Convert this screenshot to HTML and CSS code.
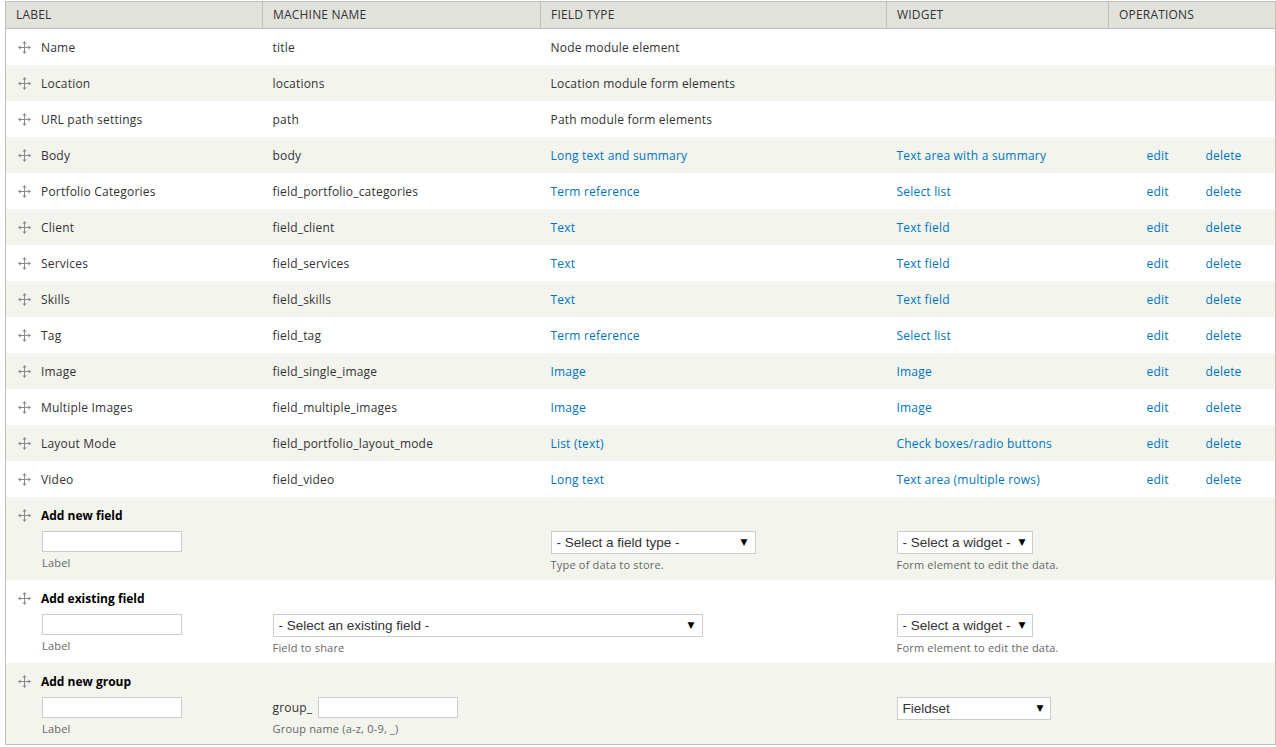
FILE: index.html
```html
<!DOCTYPE html>
<html>
<head>
<meta charset="utf-8">
<title>Manage fields</title>
<link rel="stylesheet" href="styles.css">
</head>
<body>
<table class="fields">
  <colgroup>
    <col class="c-label"><col class="c-machine"><col class="c-type"><col class="c-widget"><col class="c-edit"><col class="c-delete">
  </colgroup>
  <thead>
    <tr><th>Label</th><th>Machine name</th><th>Field type</th><th>Widget</th><th colspan="2">Operations</th></tr>
  </thead>
  <tbody>
    <tr class="odd"><td><span class="handle"><svg viewBox="0 0 13 13" width="13" height="13"><path d="M6.5 1.5v10M1.5 6.5h10" stroke="#8a8a8a" stroke-width="1"/><path d="M6.5 0l2 2.5h-4zM6.5 13l2-2.5h-4zM0 6.5l2.5-2v4zM13 6.5l-2.5-2v4z" fill="#8a8a8a"/></svg></span>Name</td><td>title</td><td>Node module element</td><td></td><td></td><td></td></tr>
    <tr class="even"><td><span class="handle"><svg viewBox="0 0 13 13" width="13" height="13"><path d="M6.5 1.5v10M1.5 6.5h10" stroke="#8a8a8a" stroke-width="1"/><path d="M6.5 0l2 2.5h-4zM6.5 13l2-2.5h-4zM0 6.5l2.5-2v4zM13 6.5l-2.5-2v4z" fill="#8a8a8a"/></svg></span>Location</td><td>locations</td><td>Location module form elements</td><td></td><td></td><td></td></tr>
    <tr class="odd"><td><span class="handle"><svg viewBox="0 0 13 13" width="13" height="13"><path d="M6.5 1.5v10M1.5 6.5h10" stroke="#8a8a8a" stroke-width="1"/><path d="M6.5 0l2 2.5h-4zM6.5 13l2-2.5h-4zM0 6.5l2.5-2v4zM13 6.5l-2.5-2v4z" fill="#8a8a8a"/></svg></span>URL path settings</td><td>path</td><td>Path module form elements</td><td></td><td></td><td></td></tr>
    <tr class="even"><td><span class="handle"><svg viewBox="0 0 13 13" width="13" height="13"><path d="M6.5 1.5v10M1.5 6.5h10" stroke="#8a8a8a" stroke-width="1"/><path d="M6.5 0l2 2.5h-4zM6.5 13l2-2.5h-4zM0 6.5l2.5-2v4zM13 6.5l-2.5-2v4z" fill="#8a8a8a"/></svg></span>Body</td><td>body</td><td><a href="#">Long text and summary</a></td><td><a href="#">Text area with a summary</a></td><td class="op-edit"><a href="#">edit</a></td><td class="op-del"><a href="#">delete</a></td></tr>
    <tr class="odd"><td><span class="handle"><svg viewBox="0 0 13 13" width="13" height="13"><path d="M6.5 1.5v10M1.5 6.5h10" stroke="#8a8a8a" stroke-width="1"/><path d="M6.5 0l2 2.5h-4zM6.5 13l2-2.5h-4zM0 6.5l2.5-2v4zM13 6.5l-2.5-2v4z" fill="#8a8a8a"/></svg></span>Portfolio Categories</td><td>field_portfolio_categories</td><td><a href="#">Term reference</a></td><td><a href="#">Select list</a></td><td class="op-edit"><a href="#">edit</a></td><td class="op-del"><a href="#">delete</a></td></tr>
    <tr class="even"><td><span class="handle"><svg viewBox="0 0 13 13" width="13" height="13"><path d="M6.5 1.5v10M1.5 6.5h10" stroke="#8a8a8a" stroke-width="1"/><path d="M6.5 0l2 2.5h-4zM6.5 13l2-2.5h-4zM0 6.5l2.5-2v4zM13 6.5l-2.5-2v4z" fill="#8a8a8a"/></svg></span>Client</td><td>field_client</td><td><a href="#">Text</a></td><td><a href="#">Text field</a></td><td class="op-edit"><a href="#">edit</a></td><td class="op-del"><a href="#">delete</a></td></tr>
    <tr class="odd"><td><span class="handle"><svg viewBox="0 0 13 13" width="13" height="13"><path d="M6.5 1.5v10M1.5 6.5h10" stroke="#8a8a8a" stroke-width="1"/><path d="M6.5 0l2 2.5h-4zM6.5 13l2-2.5h-4zM0 6.5l2.5-2v4zM13 6.5l-2.5-2v4z" fill="#8a8a8a"/></svg></span>Services</td><td>field_services</td><td><a href="#">Text</a></td><td><a href="#">Text field</a></td><td class="op-edit"><a href="#">edit</a></td><td class="op-del"><a href="#">delete</a></td></tr>
    <tr class="even"><td><span class="handle"><svg viewBox="0 0 13 13" width="13" height="13"><path d="M6.5 1.5v10M1.5 6.5h10" stroke="#8a8a8a" stroke-width="1"/><path d="M6.5 0l2 2.5h-4zM6.5 13l2-2.5h-4zM0 6.5l2.5-2v4zM13 6.5l-2.5-2v4z" fill="#8a8a8a"/></svg></span>Skills</td><td>field_skills</td><td><a href="#">Text</a></td><td><a href="#">Text field</a></td><td class="op-edit"><a href="#">edit</a></td><td class="op-del"><a href="#">delete</a></td></tr>
    <tr class="odd"><td><span class="handle"><svg viewBox="0 0 13 13" width="13" height="13"><path d="M6.5 1.5v10M1.5 6.5h10" stroke="#8a8a8a" stroke-width="1"/><path d="M6.5 0l2 2.5h-4zM6.5 13l2-2.5h-4zM0 6.5l2.5-2v4zM13 6.5l-2.5-2v4z" fill="#8a8a8a"/></svg></span>Tag</td><td>field_tag</td><td><a href="#">Term reference</a></td><td><a href="#">Select list</a></td><td class="op-edit"><a href="#">edit</a></td><td class="op-del"><a href="#">delete</a></td></tr>
    <tr class="even"><td><span class="handle"><svg viewBox="0 0 13 13" width="13" height="13"><path d="M6.5 1.5v10M1.5 6.5h10" stroke="#8a8a8a" stroke-width="1"/><path d="M6.5 0l2 2.5h-4zM6.5 13l2-2.5h-4zM0 6.5l2.5-2v4zM13 6.5l-2.5-2v4z" fill="#8a8a8a"/></svg></span>Image</td><td>field_single_image</td><td><a href="#">Image</a></td><td><a href="#">Image</a></td><td class="op-edit"><a href="#">edit</a></td><td class="op-del"><a href="#">delete</a></td></tr>
    <tr class="odd"><td><span class="handle"><svg viewBox="0 0 13 13" width="13" height="13"><path d="M6.5 1.5v10M1.5 6.5h10" stroke="#8a8a8a" stroke-width="1"/><path d="M6.5 0l2 2.5h-4zM6.5 13l2-2.5h-4zM0 6.5l2.5-2v4zM13 6.5l-2.5-2v4z" fill="#8a8a8a"/></svg></span>Multiple Images</td><td>field_multiple_images</td><td><a href="#">Image</a></td><td><a href="#">Image</a></td><td class="op-edit"><a href="#">edit</a></td><td class="op-del"><a href="#">delete</a></td></tr>
    <tr class="even"><td><span class="handle"><svg viewBox="0 0 13 13" width="13" height="13"><path d="M6.5 1.5v10M1.5 6.5h10" stroke="#8a8a8a" stroke-width="1"/><path d="M6.5 0l2 2.5h-4zM6.5 13l2-2.5h-4zM0 6.5l2.5-2v4zM13 6.5l-2.5-2v4z" fill="#8a8a8a"/></svg></span>Layout Mode</td><td>field_portfolio_layout_mode</td><td><a href="#">List (text)</a></td><td><a href="#">Check boxes/radio buttons</a></td><td class="op-edit"><a href="#">edit</a></td><td class="op-del"><a href="#">delete</a></td></tr>
    <tr class="odd"><td><span class="handle"><svg viewBox="0 0 13 13" width="13" height="13"><path d="M6.5 1.5v10M1.5 6.5h10" stroke="#8a8a8a" stroke-width="1"/><path d="M6.5 0l2 2.5h-4zM6.5 13l2-2.5h-4zM0 6.5l2.5-2v4zM13 6.5l-2.5-2v4z" fill="#8a8a8a"/></svg></span>Video</td><td>field_video</td><td><a href="#">Long text</a></td><td><a href="#">Text area (multiple rows)</a></td><td class="op-edit"><a href="#">edit</a></td><td class="op-del"><a href="#">delete</a></td></tr>

    <tr class="even add-row">
      <td>
        <div class="add-title"><span class="handle"><svg viewBox="0 0 13 13" width="13" height="13"><path d="M6.5 1.5v10M1.5 6.5h10" stroke="#8a8a8a" stroke-width="1"/><path d="M6.5 0l2 2.5h-4zM6.5 13l2-2.5h-4zM0 6.5l2.5-2v4zM13 6.5l-2.5-2v4z" fill="#8a8a8a"/></svg></span>Add new field</div>
        <div class="indent"><input type="text" class="text-in"><div class="desc">Label</div></div>
      </td>
      <td></td>
      <td class="form-cell"><div class="sel sel-type"><select><option>- Select a field type -</option></select><span class="arrow">▼</span></div><div class="desc desc-sel">Type of data to store.</div></td>
      <td class="form-cell"><div class="sel sel-widget"><select><option>- Select a widget -</option></select><span class="arrow">▼</span></div><div class="desc desc-sel">Form element to edit the data.</div></td>
      <td></td><td></td>
    </tr>
    <tr class="odd add-row">
      <td>
        <div class="add-title"><span class="handle"><svg viewBox="0 0 13 13" width="13" height="13"><path d="M6.5 1.5v10M1.5 6.5h10" stroke="#8a8a8a" stroke-width="1"/><path d="M6.5 0l2 2.5h-4zM6.5 13l2-2.5h-4zM0 6.5l2.5-2v4zM13 6.5l-2.5-2v4z" fill="#8a8a8a"/></svg></span>Add existing field</div>
        <div class="indent"><input type="text" class="text-in"><div class="desc">Label</div></div>
      </td>
      <td class="form-cell" colspan="2"><div class="sel sel-existing"><select><option>- Select an existing field -</option></select><span class="arrow">▼</span></div><div class="desc desc-sel">Field to share</div></td>
      <td class="form-cell"><div class="sel sel-widget"><select><option>- Select a widget -</option></select><span class="arrow">▼</span></div><div class="desc desc-sel">Form element to edit the data.</div></td>
      <td></td><td></td>
    </tr>
    <tr class="even add-row last">
      <td>
        <div class="add-title"><span class="handle"><svg viewBox="0 0 13 13" width="13" height="13"><path d="M6.5 1.5v10M1.5 6.5h10" stroke="#8a8a8a" stroke-width="1"/><path d="M6.5 0l2 2.5h-4zM6.5 13l2-2.5h-4zM0 6.5l2.5-2v4zM13 6.5l-2.5-2v4z" fill="#8a8a8a"/></svg></span>Add new group</div>
        <div class="indent"><input type="text" class="text-in"><div class="desc">Label</div></div>
      </td>
      <td class="form-cell"><div class="prefix-line"><span class="prefix">group_</span><input type="text" class="text-in"></div><div class="desc">Group name (a-z, 0-9, _)</div></td>
      <td></td>
      <td class="form-cell"><div class="sel sel-fieldset"><select><option>Fieldset</option></select><span class="arrow">▼</span></div></td>
      <td></td><td></td>
    </tr>
  </tbody>
</table>
</body>
</html>
```

FILE: styles.css
```css
html, body {
  margin: 0;
  padding: 0;
  background: #fff;
}
body {
  padding: 1px 0 0 5px;
  font-family: "Open Sans", "DejaVu Sans", sans-serif;
  font-size: 12px;
  letter-spacing: 0.2px;
  color: #333;
}
.fields {
  border-collapse: collapse;
  table-layout: fixed;
  width: 1270px;
  border: 1px solid #bebfb9;
}
.c-label { width: 257px; }
.c-machine { width: 278px; }
.c-type { width: 346px; }
.c-widget { width: 222px; }
.c-edit { width: 87px; }
.c-delete { width: 80px; }

.fields th {
  background: #e1e2dc;
  border: 1px solid #bebfb9;
  height: 24px;
  padding: 0 10px 2px;
  text-align: left;
  font-weight: normal;
  text-transform: uppercase;
  color: #333;
  font-size: 12px;
}
.fields td {
  height: 36px;
  padding: 0 10px;
  white-space: nowrap;
}
.fields tr.odd { background: #fff; }
.fields tr.even { background: #f3f4ee; }
.fields a {
  color: #0074bd;
  text-decoration: none;
}
td.op-edit { padding-left: 38px; }
.handle {
  display: inline-block;
  width: 13px;
  height: 13px;
  margin: 0 10px 0 2px;
  vertical-align: -2px;
}
.handle svg { display: block; }

.add-row td {
  height: auto;
  vertical-align: top;
  padding-top: 11px;
  padding-bottom: 10px;
}
.add-row.last td { padding-bottom: 8px; }
.add-title {
  font-weight: bold;
  line-height: 16px;
  color: #000;
  letter-spacing: 0;
}
.indent {
  padding-left: 26px;
  margin-top: 7px;
}
.text-in {
  box-sizing: border-box;
  width: 140px;
  height: 21px;
  border: 1px solid #ccc;
  background: #fff;
  margin: 0;
  padding: 2px 4px;
  display: block;
}
.desc {
  font-size: 11px;
  color: #666;
  line-height: 14px;
  margin-top: 4px;
}
.add-row td.form-cell { padding-top: 34px; padding-bottom: 8px; }

.sel {
  position: relative;
  display: block;
}
.sel select {
  appearance: none;
  -webkit-appearance: none;
  box-sizing: border-box;
  height: 23px;
  border: 1px solid #ccc;
  background: #fff;
  font-family: "Liberation Sans", Arial, sans-serif;
  font-size: 13.5px;
  letter-spacing: 0;
  color: #333;
  padding: 0 0 0 5px;
  margin: 0;
  display: block;
  border-radius: 0;
}
.sel .arrow {
  position: absolute;
  top: 5px;
  font-size: 9px;
  line-height: 12px;
  color: #000;
  pointer-events: none;
}
.sel-type select { width: 205px; }
.sel-type .arrow { left: 190px; }
.sel-widget select { width: 136px; }
.sel-widget .arrow { left: 122px; }
.sel-existing select { width: 430px; }
.sel-existing .arrow { left: 415px; }
.sel-fieldset select { width: 154px; }
.sel-fieldset .arrow { left: 140px; }

.prefix-line {
  display: flex;
  align-items: center;
}
.prefix {
  margin-right: 6px;
  color: #333;
}
```
